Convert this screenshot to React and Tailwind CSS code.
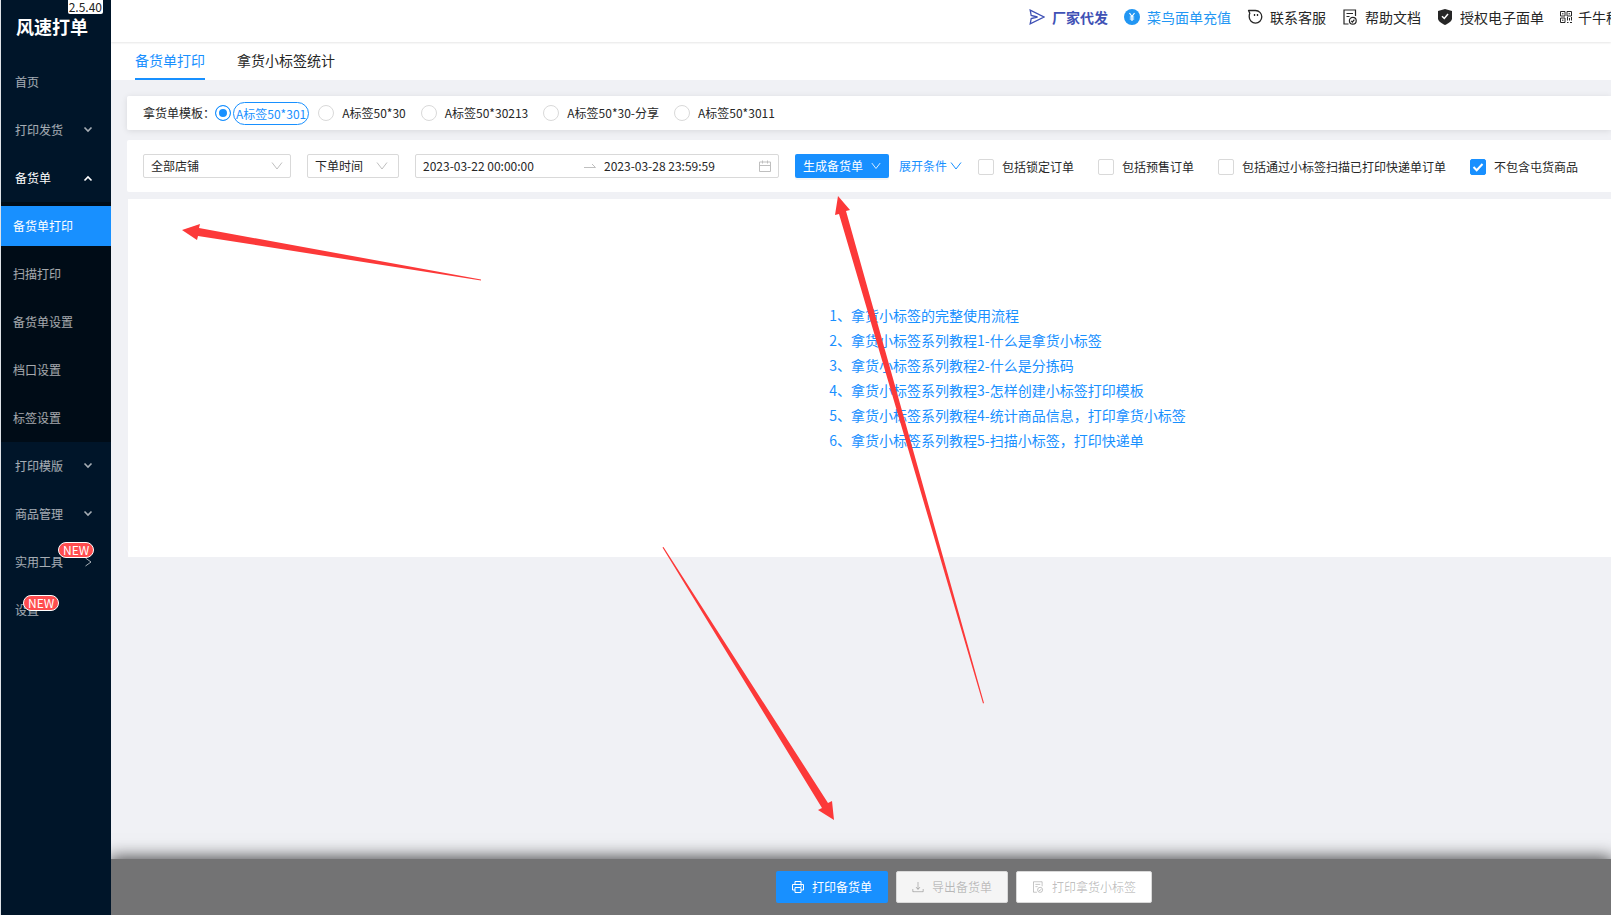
import React from 'react';

const MENU = [
  { label: '首页' },
  { label: '打印发货', arrow: 'down' },
  { label: '备货单', arrow: 'up', children: ['备货单打印', '扫描打印', '备货单设置', '档口设置', '标签设置'] },
  { label: '打印模版', arrow: 'down' },
  { label: '商品管理', arrow: 'down' },
  { label: '实用工具', arrow: 'right', badge: 'left-[57px] top-1' },
  { label: '设置', badge: 'left-[22px] top-[9px]' },
];

const TEMPLATES = ['A标签50*301', 'A标签50*30', 'A标签50*30213', 'A标签50*30-分享', 'A标签50*3011'];

const FILTERS = [
  { id: 'locked', label: '包括锁定订单' },
  { id: 'presale', label: '包括预售订单' },
  { id: 'scanned', label: '包括通过小标签扫描已打印快递单订单' },
  { id: 'stock', label: '不包含屯货商品', checked: true },
];

const GUIDES = [
  '1、拿货小标签的完整使用流程',
  '2、拿货小标签系列教程1-什么是拿货小标签',
  '3、拿货小标签系列教程2-什么是分拣码',
  '4、拿货小标签系列教程3-怎样创建小标签打印模板',
  '5、拿货小标签系列教程4-统计商品信息，打印拿货小标签',
  '6、拿货小标签系列教程5-扫描小标签，打印快递单',
];

const ARROW_PATHS = {
  down: 'M1.500 2.500L5 6l3.500-3.500',
  up: 'M1.500 7.500L5 4l3.500 3.500',
  right: 'M2.500 1l5.500 4-5.500 4',
};

const Chevron = ({ dir = 'down', width = 1, className = '' }) => (
  <svg viewBox="0 0 10 10" fill="none" stroke="currentColor" strokeWidth={width} className={className}>
    <path d={ARROW_PATHS[dir]} />
  </svg>
);

const ThinDown = ({ className = '' }) => (
  <svg viewBox="0 0 12 12" fill="none" stroke="currentColor" className={className}>
    <path d="M1 2.5l5 6.5 5-6.5" />
  </svg>
);

const SendIcon = () => (
  <svg viewBox="0 0 16 16" fill="none" stroke="currentColor" strokeWidth="1.3" className="w-4 h-4">
    <path d="M1.200 1.200L15 8 1.200 14.800l1-5.300L8.500 8 2.200 6.500z" />
  </svg>
);

const YenIcon = () => (
  <svg viewBox="0 0 16 16" className="w-4 h-4">
    <circle cx="8" cy="8" r="8" fill="#2196f3" />
    <path d="M5.500 4L8 7.500 10.500 4M8 7.500V12M5.800 8h4.400M5.800 10h4.400" fill="none" stroke="#fff" strokeWidth="1.2" />
  </svg>
);

const ChatIcon = () => (
  <svg viewBox="0 0 16 16" fill="none" stroke="currentColor" strokeWidth="1.3" className="w-4 h-4">
    <path d="M1.500 1.500H8.500A6.300 6.300 0 1 1 2.200 7.800Q2.200 5.500 2.800 4.300z" strokeLinejoin="round" />
    <path d="M7.500 5v2M10.500 5v2" />
  </svg>
);

const DocIcon = ({ className = 'w-4 h-4' }) => (
  <svg viewBox="0 0 16 16" fill="none" stroke="currentColor" strokeWidth="1.2" className={className}>
    <path d="M6.500 15H2V1h11.500v6M4.500 4.500h6.500M4.500 7.500h3" />
    <circle cx="10.800" cy="11.800" r="3.400" />
    <path d="M9.200 11.800l1.200 1.200 2-2.300" />
  </svg>
);

const ShieldIcon = () => (
  <svg viewBox="0 0 16 16" className="w-4 h-4">
    <path d="M8 0l7 2v7.500c0 3-4 5-7 6.500-3-1.500-7-3.500-7-6.500V2z" fill="currentColor" />
    <path d="M5 7.200l2.300 2.300L11 5" fill="none" stroke="#fff" strokeWidth="1.500" />
  </svg>
);

const QrIcon = () => (
  <svg viewBox="0 0 12 12" fill="none" stroke="currentColor" className="w-3 h-3">
    <path d="M.5.5h4.500v4.500H.5zM7 .5h4.500v4.500H7zM.5 7h4.500v4.500H.5zM2 2.800h1.500M8.500 2.800H10M2 9.200h1.500M7.500 6v3.500M9.500 7v2.500M11.500 6v3.500M7 11.500h1.500M10 11.500h2" />
  </svg>
);

const PrinterIcon = () => (
  <svg viewBox="0 0 12 12" fill="none" stroke="currentColor" className="w-3 h-3">
    <path d="M3 3.500v-3h6v3M3 9H.5V3.500h11V9H9M3 6.500h6v5H3zM8.500 5h1.500" />
  </svg>
);

const DownloadIcon = () => (
  <svg viewBox="0 0 12 12" fill="none" stroke="currentColor" className="w-3 h-3">
    <path d="M6 1v7M4 6l2 2.500L8 6M.8 8v2.700h10.400V8" />
  </svg>
);

const CalendarIcon = () => (
  <svg viewBox="0 0 12 12" fill="none" stroke="currentColor" className="w-3 h-3 text-[#bfbfbf]">
    <path d="M.5 2h11v9.500H.5zM.5 5.500h11M3.500.5v3M8.500.5v3" />
  </svg>
);

const TOP_LINKS = [
  { label: '厂家代发', icon: <SendIcon />, className: 'text-[#3f51b5] font-bold' },
  { label: '菜鸟面单充值', icon: <YenIcon />, className: 'text-[#2196f3]' },
  { label: '联系客服', icon: <ChatIcon /> },
  { label: '帮助文档', icon: <DocIcon /> },
  { label: '授权电子面单', icon: <ShieldIcon /> },
];

const Sidebar = () => (
  <aside className="w-[111px] shrink-0 bg-[#001529] border-l border-[#dfe3e8] text-xs text-white/65">
    <div className="relative h-[58px] px-[15px] pt-3">
      <span className="absolute right-2 top-0 h-[14px] px-px rounded-b-xs bg-white text-xs leading-[14px] text-[#222]">2.5.40</span>
      <h1 className="text-lg leading-7 font-bold text-white whitespace-nowrap">风速打单</h1>
    </div>
    <nav>
      {MENU.map((item) => (
        <div key={item.label}>
          <a
            href="#"
            className={`relative flex items-center justify-between h-12 pl-[14px] pr-[18px] ${item.children ? 'text-white' : ''}`}
          >
            {item.label}
            {item.arrow && (
              <Chevron dir={item.arrow} width={item.arrow === 'right' ? 1 : 1.6} className="w-[10px] h-[10px]" />
            )}
            {item.badge && (
              <span className={`absolute ${item.badge} h-4 px-1 rounded-full border border-white bg-[#ff4d4f] text-xs leading-[14px] text-white`}>
                NEW
              </span>
            )}
          </a>
          {item.children && (
            <div className="bg-[#000c17] flex flex-col gap-2 py-1">
              {item.children.map((sub, i) => (
                <a
                  key={sub}
                  href="#"
                  className={`flex items-center h-10 pl-3 ${i === 0 ? 'bg-[#1890ff] text-white' : ''}`}
                >
                  {sub}
                </a>
              ))}
            </div>
          )}
        </div>
      ))}
    </nav>
  </aside>
);

const TopBar = () => (
  <header className="relative h-[42px] flex items-center justify-end gap-4 pb-2 text-sm bg-white shadow-[0_1px_2px_rgba(0,0,0,0.1)] whitespace-nowrap">
    {TOP_LINKS.map((link) => (
      <a key={link.label} href="#" className={`flex items-center gap-[7px] ${link.className || ''}`}>
        {link.icon}
        {link.label}
      </a>
    ))}
    <a href="#" className="flex items-center gap-[6px] w-[51px] overflow-hidden">
      <span className="shrink-0"><QrIcon /></span>
      千牛移
    </a>
  </header>
);

const Tabs = () => (
  <div role="tablist" className="h-[38px] flex gap-8 px-6 bg-white text-sm">
    <button role="tab" aria-selected="true" className="border-b-2 border-[#1890ff] text-[#1890ff]">备货单打印</button>
    <button role="tab" aria-selected="false" className="border-b-2 border-transparent">拿货小标签统计</button>
  </div>
);

const TemplatePicker = () => (
  <fieldset className="h-[34px] flex items-center pl-4 rounded-l-xs bg-white shadow-[0_1px_6px_rgba(0,0,0,0.1)] whitespace-nowrap">
    <span className="w-[72px]">拿货单模板：</span>
    <div className="flex items-center gap-[15px]">
      {TEMPLATES.map((name, i) => (
        <label key={name} className={`flex items-center ${i === 0 ? 'gap-[2px] -mr-[6px]' : 'gap-2'}`}>
          <input
            type="radio"
            name="template"
            defaultChecked={i === 0}
            className="appearance-none w-4 h-4 rounded-full border border-[#d9d9d9] checked:border-[#1890ff] checked:bg-[#1890ff] checked:shadow-[inset_0_0_0_3px_#fff]"
          />
          <span className={i === 0 ? 'h-[23px] px-[2px] leading-[21px] rounded-full border border-[#1890ff] text-[#1890ff]' : ''}>
            {name}
          </span>
        </label>
      ))}
    </div>
  </fieldset>
);

const Select = ({ label, value, className, arrow = 'right-2' }) => (
  <div className={`relative ${className}`}>
    <select aria-label={label} className="appearance-none w-full h-6 px-[7px] rounded-xs border border-[#d9d9d9] bg-white">
      <option>{value}</option>
    </select>
    <ThinDown className={`absolute ${arrow} top-[6px] w-3 h-3 text-[#bfbfbf] pointer-events-none`} />
  </div>
);

const FilterBar = () => (
  <div className="h-[52px] flex items-center pl-4 rounded-l-xs bg-white whitespace-nowrap">
    <div className="flex items-center gap-4">
      <Select label="店铺" value="全部店铺" className="w-[148px]" />
      <Select label="时间类型" value="下单时间" className="w-[92px]" arrow="right-[11px]" />
      <div className="w-[364px] h-6 flex items-center gap-2 px-[7px] rounded-xs border border-[#d9d9d9]">
        <input aria-label="开始时间" defaultValue="2023-03-22 00:00:00" className="w-[153px]" />
        <svg viewBox="0 0 12 12" fill="none" stroke="#bfbfbf" className="w-3 h-3 shrink-0">
          <path d="M0 7.500h11.500L8 4" />
        </svg>
        <input aria-label="结束时间" defaultValue="2023-03-28 23:59:59" className="min-w-0 flex-1" />
        <CalendarIcon />
      </div>
      <button className="h-6 w-[94px] flex items-center gap-2 px-2 rounded-xs bg-[#1890ff] text-white shadow-[0_2px_0_rgba(0,0,0,0.04)]">
        生成备货单
        <ThinDown className="w-[10px] h-[10px]" />
      </button>
    </div>
    <button className="flex items-center gap-[3px] ml-[10px] text-[#1890ff]">
      展开条件
      <ThinDown className="w-3 h-3" />
    </button>
    <div className="flex gap-6 ml-4 pt-px">
      {FILTERS.map((f) => (
        <label key={f.id} className="flex items-center gap-2">
          <span className="relative w-4 h-4">
            <input
              type="checkbox"
              defaultChecked={f.checked}
              className="peer block appearance-none w-4 h-4 rounded-xs border border-[#d9d9d9] checked:border-[#1890ff] checked:bg-[#1890ff]"
            />
            <svg viewBox="0 0 16 16" fill="none" stroke="#fff" strokeWidth="2" className="absolute inset-0 hidden peer-checked:block pointer-events-none">
              <path d="M3.500 8l3.200 3.200L12.500 5" />
            </svg>
          </span>
          {f.label}
        </label>
      ))}
    </div>
  </div>
);

const Guides = () => (
  <section className="h-[358px] ml-px flex justify-center pl-[276px] pt-[104px] bg-white">
    <ol className="text-sm leading-[25px] text-[#1890ff] whitespace-nowrap">
      {GUIDES.map((text) => (
        <li key={text}><a href="#">{text}</a></li>
      ))}
    </ol>
  </section>
);

const ActionBar = () => (
  <footer className="h-14 flex items-center justify-center gap-2 pl-[206px] bg-[#737374] shadow-[0_0_16px_2px_rgba(0,0,0,0.7)]">
    <button className="h-8 flex items-center gap-2 px-4 rounded-xs bg-[#1890ff] text-white">
      <PrinterIcon />
      打印备货单
    </button>
    <button disabled className="h-8 flex items-center gap-2 px-[15px] rounded-xs border border-[#d9d9d9] bg-[#f5f5f5] text-black/25">
      <DownloadIcon />
      导出备货单
    </button>
    <button disabled className="h-8 flex items-center gap-2 px-[15px] rounded-xs border border-[#d9d9d9] bg-white text-black/25">
      <DocIcon className="w-3 h-3" />
      打印拿货小标签
    </button>
  </footer>
);

// red pointers drawn over the whole page
const Pointers = () => (
  <svg width="1611" height="915" fill="#fc3939" className="absolute left-0 top-0 max-w-none pointer-events-none">
    <path d="M182 230L200 224 199 228 481 279.500 481 280.500 198 236 197 240z" />
    <path d="M838 196L850 210 846 211 984 703 983 703.500 839 214 835 215z" />
    <path d="M834 820L818 810 822 808 662.500 547.500 663.500 547 828 803 832 801z" />
  </svg>
);

export default function App() {
  return (
    <div className="relative min-h-screen flex overflow-hidden bg-[#f0f1f5] text-xs text-[#262626] font-['Noto_Sans_CJK_SC',sans-serif]">
      <Sidebar />
      <div className="flex-1 min-w-0 flex flex-col overflow-hidden">
        <TopBar />
        <Tabs />
        <main className="flex-1 pl-4 pt-4">
          <TemplatePicker />
          <div className="pt-[10px] pb-[7px]">
            <FilterBar />
          </div>
          <Guides />
        </main>
        <ActionBar />
      </div>
      <Pointers />
    </div>
  );
}
